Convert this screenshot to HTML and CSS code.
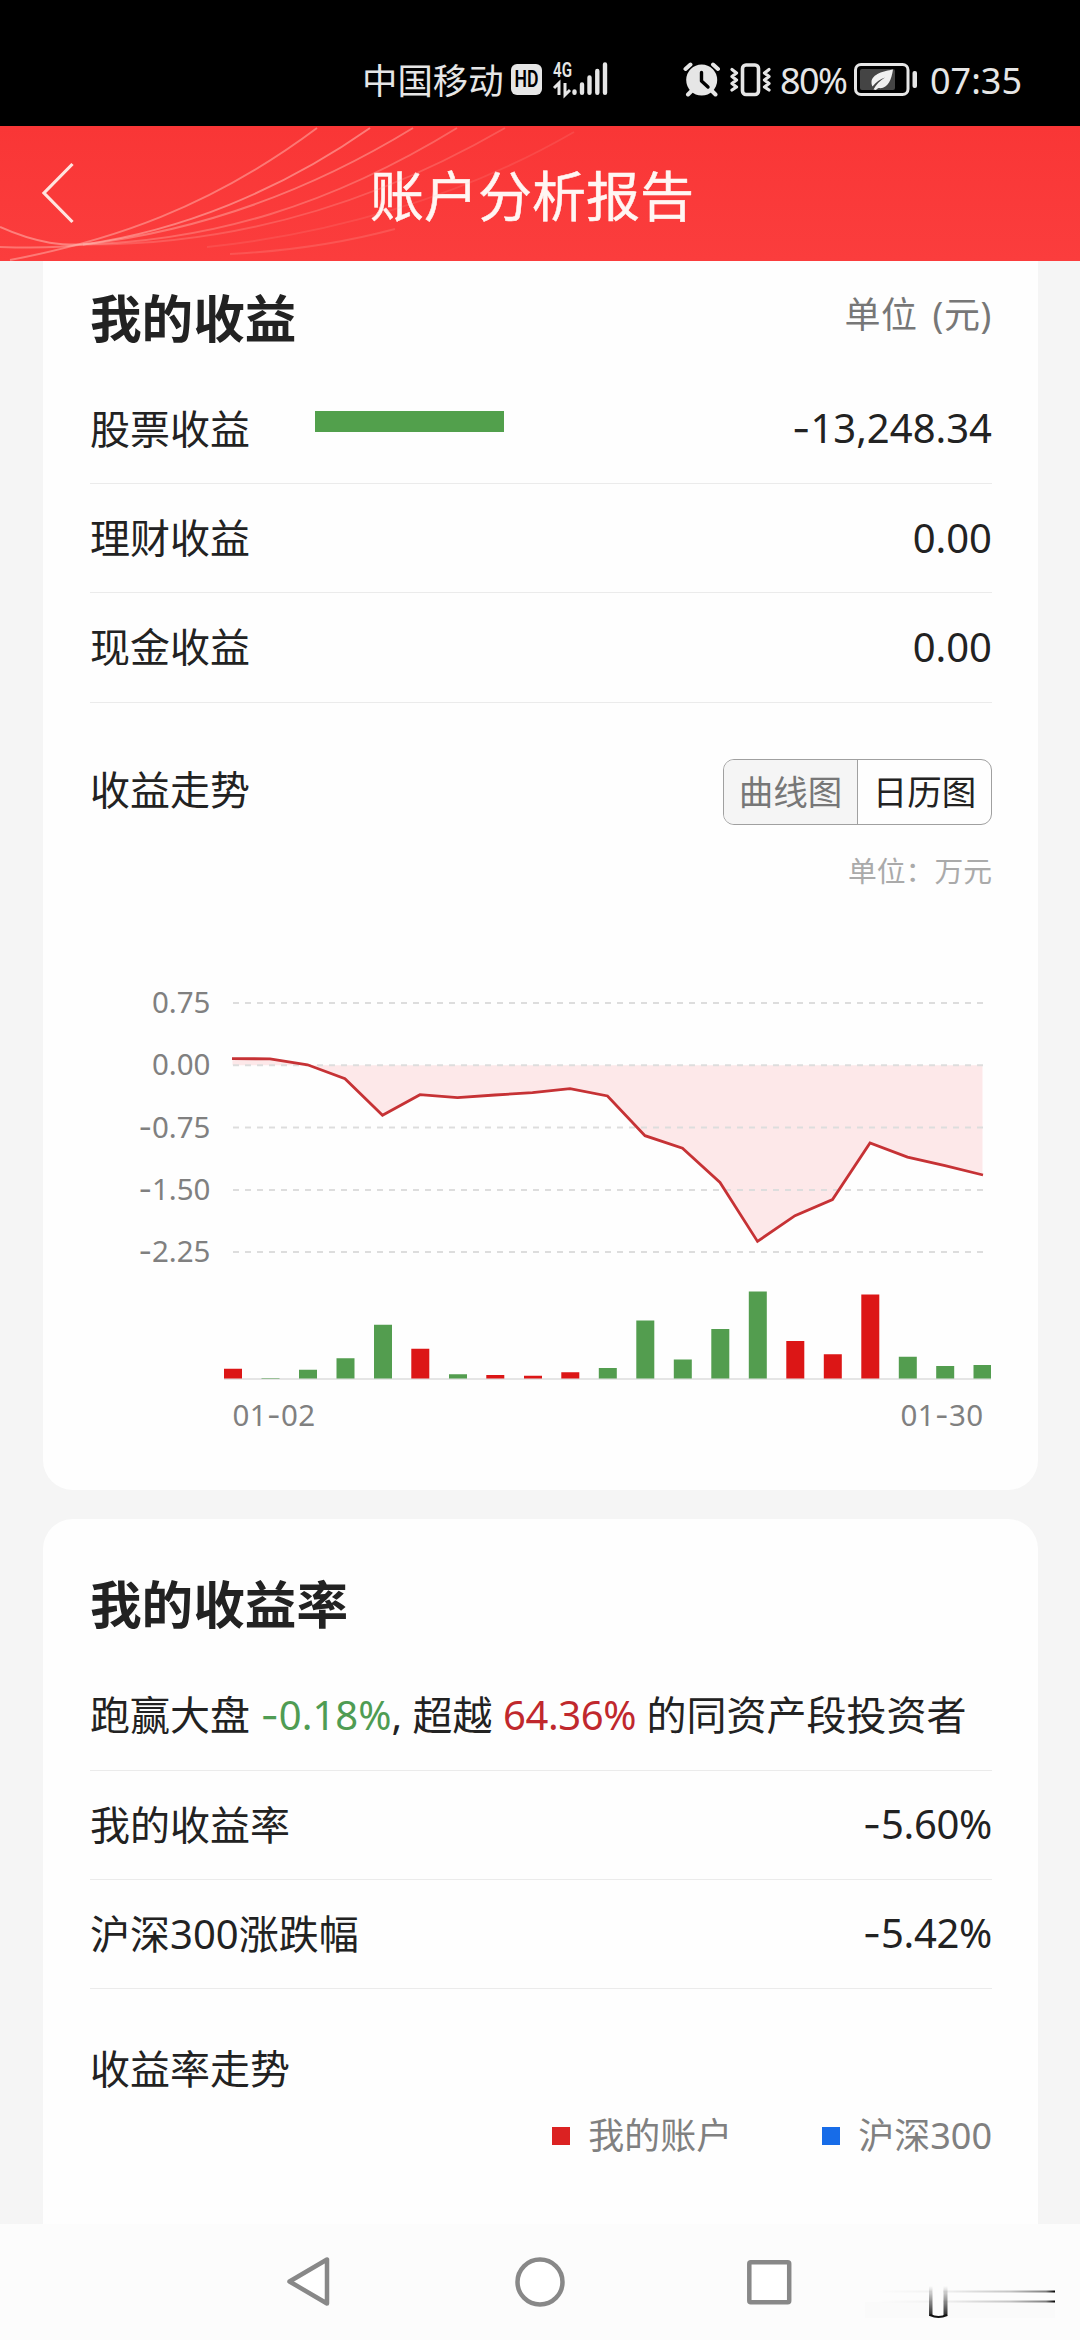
FILE: index.html
```html
<!DOCTYPE html>
<html lang="zh-CN">
<head>
<meta charset="utf-8">
<title>账户分析报告</title>
<link rel="stylesheet" href="styles.css">
</head>
<body>
<div class="screen">
  <div class="status">
    <span class="carrier">中国移动</span>
    <svg class="net" width="98" height="48" viewBox="510 52 98 48">
      <rect x="511" y="64" width="31" height="31" rx="6" fill="#e6e6e6"/>
      <text class="hd" x="526.5" y="87" text-anchor="middle" textLength="24" lengthAdjust="spacingAndGlyphs">HD</text>
      <text class="gen" x="553" y="77" textLength="19" lengthAdjust="spacingAndGlyphs">4G</text>
      <path d="M554 88l5-5v12M565 83v12l5-5" fill="none" stroke="#e6e6e6" stroke-width="3"/>
      <g stroke="#e6e6e6" stroke-width="4.4" stroke-linecap="round"><path d="M574.5 91.500v1.300M582 84.500v8.300M589.500 77.500v15.300M597.300 71v21.800M605 64.500v28.300"/></g>
    </svg>
    <svg class="alerts" width="88" height="48" viewBox="683 52 88 48">
      <circle cx="701.700" cy="80" r="15.500" fill="#e6e6e6"/>
      <path d="M685.500 69l5-4.500M718 69l-5-4.500M688 94.500l4-4M715.500 94.500l-4-4" stroke="#e6e6e6" stroke-width="4" stroke-linecap="round"/>
      <path d="M701.500 72.500v8.500l6.500 6" fill="none" stroke="#000" stroke-width="3.400" stroke-linecap="round" stroke-linejoin="round"/>
      <rect x="742.500" y="65" width="16" height="29.500" rx="3.500" fill="none" stroke="#e6e6e6" stroke-width="3.600"/>
      <path d="M732 69.500l4.500 3.500-4.500 3.500 4.500 3.500-4.500 3.500 4.500 3.500-4.500 3M769 69.500l-4.500 3.500 4.500 3.500-4.500 3.500 4.500 3.500-4.500 3.500 4.500 3" fill="none" stroke="#e6e6e6" stroke-width="3.200" stroke-linecap="round" stroke-linejoin="round"/>
    </svg>
    <span class="pct">80%</span>
    <svg class="battery" width="64" height="48" viewBox="854 52 64 48">
      <rect x="855.500" y="64.500" width="52.500" height="30" rx="5.500" fill="none" stroke="#e6e6e6" stroke-width="3"/>
      <rect x="860" y="69" width="35" height="21" rx="2" fill="#444"/>
      <path d="M893 69.500C884 71 872 74 871.500 82c0 2 .3 3.300 1 4.500C876 82 880 79 885 77.500c-5 3-9 7-11.500 12l2.500.5c1-1 1.500-1.500 2.500-2 9 1.500 13-8 14.500-18.500z" fill="#f0f0f0"/>
      <rect x="912.500" y="71" width="4.500" height="17" rx="2" fill="#e6e6e6"/>
    </svg>
    <span class="clock">07:35</span>
  </div>

  <header class="appbar">
    <svg class="waves" viewBox="0 0 1080 135" fill="none" stroke="#ffb8b0" stroke-width="2">
      <path d="M10 134C110 115 210 82 317 2" opacity=".5"/>
      <path d="M0 101C40 119 65 119 83 118.500C180 105 280 65 370 2" opacity=".55"/>
      <path d="M0 121C30 122 60 122 83 118.500C200 105 310 65 413 2" opacity=".45"/>
      <path d="M83 118.500C210 115 330 80 457 2" opacity=".35"/>
      <path d="M83 118.500C230 120 370 80 505 2" opacity=".25"/>
      <path d="M207 121C330 108 460 72 574 6" opacity=".14"/>
      <path d="M230 128C290 125 350 115 395 103" opacity=".2"/>
    </svg>
    <svg class="back" width="34" height="62" viewBox="0 0 34 62"><path d="M31.500 2L3 31l28.500 29" fill="none" stroke="#ffe4df" stroke-width="3.200"/></svg>
    <h1 class="page-title">账户分析报告</h1>
  </header>

  <main class="content">
    <section class="card card-first">
      <div class="card-head">
        <h2 class="card-title">我的收益</h2>
        <span class="unit">单位 (元)</span>
      </div>
      <div class="row"><span class="label">股票收益</span><i class="meter"></i><span class="value"><span class="neg">-</span>13,248.34</span></div>
      <div class="row"><span class="label">理财收益</span><span class="value">0.00</span></div>
      <div class="row"><span class="label">现金收益</span><span class="value">0.00</span></div>
      <div class="trend-head">
        <span class="label">收益走势</span>
        <div class="toggle"><span class="tab tab-on">曲线图</span><span class="tab">日历图</span></div>
      </div>
      <div class="chart-unit">单位：万元</div>
      <svg class="chart" width="901" height="480" viewBox="90 960 901 480">
        <path d="M232.500 1058.700L270 1058.800 307.500 1064.800 345 1078.700 382.500 1115.300 420 1094.700 457.500 1097.700 495 1095 532.500 1092.700 570 1088.700 607.500 1096 645 1135.700 682.500 1148.200 720 1182.500 757.500 1241.400 795 1215.700 832.500 1199.600 870 1142.900 907.500 1157.100 945 1165.700 982.500 1175V1065.300H232.500z" fill="#fde8e9"/>
        <path class="grid" d="M233 1003H983M233 1065.300H983M233 1127.500H983M233 1190H983M233 1252H983"/>
        <path class="axis" d="M224 1379H991"/>
        <path class="line" d="M232 1058.700L270 1058.800 307.500 1064.800 345 1078.700 382.500 1115.300 420 1094.700 457.500 1097.700 495 1095 532.500 1092.700 570 1088.700 607.500 1096 645 1135.700 682.500 1148.200 720 1182.500 757.500 1241.400 795 1215.700 832.500 1199.600 870 1142.900 907.500 1157.100 945 1165.700 983 1175"/>
        <path class="up" d="M224 1368.700h18v9.800h-18zM411.300 1348.700h18v29.800h-18zM486.300 1375h18v3.500h-18zM524 1375.700h18v2.800h-18zM561.300 1372.300h18v6.200h-18zM786.300 1341h18v37.500h-18zM823.800 1354.300h18v24.200h-18zM861.300 1294.600h18v83.900h-18z"/>
        <path class="down" d="M261.500 1377.900h18v.6h-18zM299 1369.700h18v8.800h-18zM336.500 1358.300h18v20.200h-18zM374 1324.700h18v53.800h-18zM449 1374.300h18v4.200h-18zM598.800 1367.900h18v10.600h-18zM636.300 1320.400h18v58.100h-18zM673.800 1359.600h18v18.900h-18zM711.300 1328.900h18v49.600h-18zM748.800 1291.400h18v87.100h-18zM898.800 1356.800h18v21.700h-18zM936.200 1366h18v12.500h-18zM973.500 1365h17.500v13.500h-17.500z"/>
        <g class="ticks" text-anchor="end">
          <text x="210.500" y="1013">0.75</text>
          <text x="210.500" y="1075.200">0.00</text>
          <text x="210.500" y="1137.500"><tspan class="neg">-</tspan>0.75</text>
          <text x="210.500" y="1200"><tspan class="neg">-</tspan>1.50</text>
          <text x="210.500" y="1262"><tspan class="neg">-</tspan>2.25</text>
          <text x="983.500" y="1426" class="date">01<tspan class="neg">-</tspan>30</text>
          <text x="232.500" y="1426" class="date" text-anchor="start">01<tspan class="neg">-</tspan>02</text>
        </g>
      </svg>
    </section>

    <section class="card card-second">
      <h2 class="card-title">我的收益率</h2>
      <div class="row summary"><p class="sentence">跑赢大盘 <span class="fall"><span class="neg">-</span>0.18%</span>, 超越 <span class="rise">64.36%</span> 的同资产段投资者</p></div>
      <div class="row"><span class="label">我的收益率</span><span class="value percent"><span class="neg">-</span>5.60%</span></div>
      <div class="row"><span class="label">沪深300涨跌幅</span><span class="value percent"><span class="neg">-</span>5.42%</span></div>
      <div class="rate-head">收益率走势</div>
      <div class="legend">
        <span class="key"><i class="swatch mine"></i>我的账户</span>
        <span class="key"><i class="swatch index"></i>沪深300</span>
      </div>
    </section>
  </main>

  <nav class="navbar">
    <svg width="1080" height="116" viewBox="0 2224 1080 116">
      <defs>
        <linearGradient id="fadeX" x1="0" x2="1"><stop offset="0" stop-color="#000" stop-opacity="0"/><stop offset=".4" stop-color="#000" stop-opacity=".05"/><stop offset=".75" stop-color="#000" stop-opacity=".22"/><stop offset=".95" stop-color="#000" stop-opacity=".5"/><stop offset="1" stop-color="#000"/></linearGradient>
        <linearGradient id="fadeY" x1="0" y1="0" x2="0" y2="1"><stop offset="0" stop-color="#000" stop-opacity="0"/><stop offset="1" stop-color="#000" stop-opacity=".85"/></linearGradient>
      </defs>
      <g fill="#fff" stroke="#888" stroke-width="4.500" stroke-linejoin="round">
        <path d="M289.500 2281.500L327 2259.500v44z"/>
        <circle cx="540" cy="2282" r="22.500"/>
        <rect x="749.300" y="2262.300" width="39.900" height="39.900" rx="1.500"/>
      </g>
      <rect x="865" y="2302" width="190" height="16" fill="#fafafa"/>
      <rect x="875" y="2290.500" width="180" height="2" fill="url(#fadeX)"/>
      <rect x="875" y="2300.500" width="180" height="2" fill="url(#fadeX)"/>
      <rect x="932" y="2286" width="11" height="31" fill="#fcfcfc"/>
      <rect x="929" y="2286" width="3.500" height="30" fill="url(#fadeY)"/>
      <rect x="943.500" y="2286" width="4" height="30" fill="url(#fadeY)"/>
      <path d="M930 2315q8.500 4 17 0" fill="none" stroke="#111" stroke-width="2.200"/>
    </svg>
  </nav>
</div>
</body>
</html>
```
FILE: styles.css
```css
* { box-sizing: border-box; }
html, body { margin: 0; padding: 0; }
body {
  width: 1080px;
  font-family: "Noto Sans", "Noto Sans CJK SC", sans-serif;
  color: #222;
  background: #f5f5f5;
}
h1, h2, p { margin: 0; }
svg { display: block; flex: none; }
.neg { font-family: Inter, sans-serif; }

.screen {
  width: 1080px;
  height: 2340px;
  display: flex;
  flex-direction: column;
  overflow: hidden;
}

/* system status bar */
.status {
  flex: none;
  height: 126px;
  padding: 52px 0 0 362px;
  display: flex;
  align-items: flex-start;
  background: #000;
  color: #e6e6e6;
  font-size: 36px;
  line-height: 57px;
  white-space: nowrap;
}
.carrier { width: 148px; font-size: 35.400px; }
.hd { font: 600 23px Roboto, sans-serif; fill: #000; }
.gen { font: 600 20px Roboto, sans-serif; fill: #e6e6e6; }
.alerts { margin-left: 75px; }
.pct { width: 74px; margin-left: 9px; letter-spacing: -1.6px; }
.battery { margin-left: 0; }
.clock { margin-left: 12px; }

/* app bar */
.appbar {
  flex: none;
  height: 135px;
  display: grid;
  grid-template-columns: 1fr auto 1fr;
  align-items: center;
  background: linear-gradient(#f93636, #fb3d3d);
  color: #fff6f3;
  position: relative;
}
.waves { position: absolute; inset: 0; width: 1080px; height: 135px; }
.back { margin-left: 41px; margin-bottom: 1px; }
.page-title {
  margin-left: -16px;
  margin-top: 4px;
  font-size: 54px;
  line-height: 60px;
  font-weight: 400;
  -webkit-text-stroke: .5px currentColor;
}

/* cards */
.content {
  flex: 1;
  min-height: 0;
  padding: 0 42px 0 43px;
  display: flex;
  flex-direction: column;
  gap: 29px;
  overflow: hidden;
}
.card { flex: none; background: #fefefe; padding: 0 46px 0 47px; }
.card-first { height: 1229px; border-radius: 0 0 30px 30px; }
.card-second { height: 760px; border-radius: 30px 30px 0 0; padding-top: 54px; }
.card-head {
  height: 114px;
  padding-top: 26px;
  display: flex;
  justify-content: space-between;
  align-items: flex-start;
}
.card-title { font-size: 51.600px; line-height: 62px; font-weight: 700; }
.unit { font-size: 36px; line-height: 56px; color: #777; word-spacing: 5px; letter-spacing: .6px; }
.row {
  height: 109.200px;
  padding-bottom: 1px;
  display: flex;
  align-items: center;
  border-bottom: 1.500px solid #ebebeb;
  font-size: 40px;
  line-height: 54px;
  white-space: nowrap;
}
.label { width: 225px; font-size: 40px; line-height: 54px; white-space: nowrap; }
.value { margin-left: auto; }
.percent { letter-spacing: -.3px; }
.meter { width: 189px; height: 21px; margin-bottom: 14px; background: #52a04c; }
.trend-head {
  margin-top: 56px;
  height: 66px;
  display: flex;
  justify-content: space-between;
  align-items: center;
}
.trend-head .label { margin-top: -4px; }
.toggle {
  width: 269px;
  height: 66px;
  display: flex;
  border: 1.500px solid #a0a0a0;
  border-radius: 11px;
  overflow: hidden;
}
.tab { flex: 1; text-align: center; font-size: 34.500px; line-height: 64px; }
.tab-on { background: #f5f5f5; color: #777; border-right: 1.500px solid #a0a0a0; }
.chart-unit {
  margin-top: 26px;
  height: 40px;
  text-align: right;
  font-size: 28.800px;
  line-height: 40px;
  color: #aaa;
}
.chart { margin-top: 69px; }
.grid { fill: none; stroke: #ddd; stroke-width: 2; stroke-dasharray: 6 6; }
.axis { fill: none; stroke: #ddd; stroke-width: 1.500; }
.line { fill: none; stroke: #c63235; stroke-width: 2.800; }
.up { fill: #dc1616; }
.down { fill: #539d4f; }
.ticks { font-size: 29.500px; fill: #808080; }
.date { letter-spacing: .4px; }

/* rate of return */
.summary { margin-top: 26px; height: 110px; }
.fall { color: #4f9c53; }
.rise { color: #c0282d; letter-spacing: -.4px; }
.rate-head { margin-top: 53px; font-size: 40px; line-height: 54px; }
.legend {
  margin-top: 16px;
  display: flex;
  justify-content: flex-end;
  gap: 90px;
  font-size: 36px;
  line-height: 48px;
  color: #808080;
}
.key { display: flex; align-items: center; }
.swatch { width: 18px; height: 18px; margin-right: 18px; }
.mine { background: #db2222; }
.index { background: #176ce8; }

.navbar { flex: none; height: 116px; background: #fcfcfc; }
```
